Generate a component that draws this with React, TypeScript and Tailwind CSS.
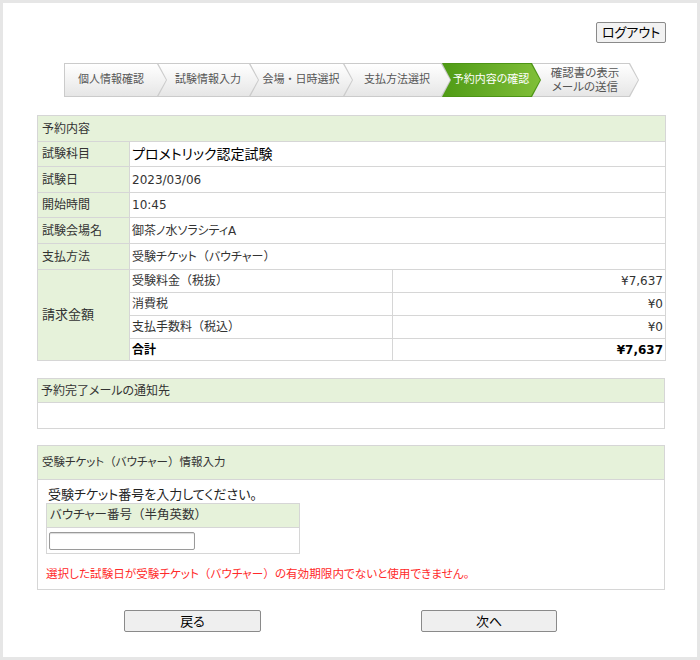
import React from 'react';

interface StepProps {
  label: React.ReactNode;
  className: string;
  active?: boolean;
  first?: boolean;
}

const chevron = '[clip-path:polygon(0_0,calc(100%_-_9px)_0,100%_50%,calc(100%_-_9px)_100%,0_100%)]';

// 括弧と中黒は全角幅のまま（palt を効かせない）
function jp(text: string) {
  return text.split(/([（）・])/).map((part, i) =>
    /^[（）・]$/.test(part) ? (
      <span key={i} className="[font-feature-settings:normal]">
        {part}
      </span>
    ) : (
      part
    )
  );
}

function Step({ label, className, active = false, first = false }: StepProps) {
  return (
    <div className={`relative h-[34px] -mr-[9px] shrink-0 ${className}`}>
      <div className={`absolute inset-0 ${active ? 'bg-[#4c9415]' : 'bg-[#cbcbcb]'} ${chevron}`} />
      <div
        className={`absolute top-px bottom-px right-px ${first ? 'left-px' : 'left-0'} ${
          active
            ? 'bg-gradient-to-r from-[#4f9b14] to-[#80bf38]'
            : 'bg-gradient-to-b from-white to-[#e6e6e6]'
        } ${chevron}`}
      />
      <div
        className={`relative flex h-full items-center justify-center whitespace-nowrap pr-[9px] text-center text-[11px] leading-[14px] ${
          first ? '' : 'pl-[8px]'
        } ${active ? 'text-white' : 'text-[#555]'}`}
      >
        {label}
      </div>
    </div>
  );
}

export default function App() {
  return (
    <div className="h-[660px] w-[700px] border-[3px] border-[#e6e6e6] bg-white font-['DejaVu_Sans','Noto_Sans_CJK_JP',sans-serif] text-[12px] text-[#333] [font-feature-settings:'palt']">
      {/* ログアウト */}
      <div className="flex justify-end pr-[31px] pt-[19px]">
        <button
          type="button"
          className="h-[21px] w-[70px] rounded-[2px] border border-[#8a8a8a] bg-[#f2f2f2] text-[13px] leading-none text-black"
        >
          ログアウト
        </button>
      </div>

      {/* ステップ */}
      <div className="ml-[61px] mt-[20px] flex">
        <Step first label="個人情報確認" className="z-50 w-[103px]" />
        <Step label="試験情報入力" className="z-40 w-[101px]" />
        <Step label={jp('会場・日時選択')} className="z-30 w-[103px]" />
        <Step label="支払方法選択" className="z-20 w-[107px]" />
        <Step active label="予約内容の確認" className="z-10 w-[99px]" />
        <Step
          label={
            <span className="text-[11.5px]">
              確認書の表示
              <br />
              メールの送信
            </span>
          }
          className="z-0 w-[107px]"
        />
      </div>

      {/* 予約内容 */}
      <table className="ml-[34px] mt-[18px] w-[628px] table-fixed border-collapse">
        <colgroup>
          <col className="w-[92px]" />
          <col className="w-[263px]" />
          <col className="w-[273px]" />
        </colgroup>
        <tbody>
          <tr>
            <td colSpan={3} className="h-[26px] border border-[#d6d6d6] bg-[#e6f2da] pl-[4px]">
              予約内容
            </td>
          </tr>
          <tr>
            <td className="h-[25px] border border-[#d6d6d6] bg-[#e6f2da] pl-[4px]">試験科目</td>
            <td colSpan={2} className="border border-[#d6d6d6] pl-[2px] text-[14px] text-black">
              プロメトリック認定試験
            </td>
          </tr>
          <tr>
            <td className="h-[26px] border border-[#d6d6d6] bg-[#e6f2da] pl-[4px]">試験日</td>
            <td colSpan={2} className="border border-[#d6d6d6] pl-[2px]">2023/03/06</td>
          </tr>
          <tr>
            <td className="h-[25px] border border-[#d6d6d6] bg-[#e6f2da] pl-[4px]">開始時間</td>
            <td colSpan={2} className="border border-[#d6d6d6] pl-[2px]">10:45</td>
          </tr>
          <tr>
            <td className="h-[26px] border border-[#d6d6d6] bg-[#e6f2da] pl-[4px]">試験会場名</td>
            <td colSpan={2} className="border border-[#d6d6d6] pl-[2px]">御茶ノ水ソラシティA</td>
          </tr>
          <tr>
            <td className="h-[26px] border border-[#d6d6d6] bg-[#e6f2da] pl-[4px]">支払方法</td>
            <td colSpan={2} className="border border-[#d6d6d6] pl-[2px]">{jp('受験チケット（バウチャー）')}</td>
          </tr>
          <tr>
            <td rowSpan={4} className="border border-[#d6d6d6] bg-[#e6f2da] pl-[4px] text-[13px]">
              請求金額
            </td>
            <td className="h-[23px] border border-[#d6d6d6] pl-[2px]">{jp('受験料金（税抜）')}</td>
            <td className="border border-[#d6d6d6] pr-[2px] text-right">¥7,637</td>
          </tr>
          <tr>
            <td className="h-[23px] border border-[#d6d6d6] pl-[2px]">消費税</td>
            <td className="border border-[#d6d6d6] pr-[2px] text-right">¥0</td>
          </tr>
          <tr>
            <td className="h-[23px] border border-[#d6d6d6] pl-[2px]">{jp('支払手数料（税込）')}</td>
            <td className="border border-[#d6d6d6] pr-[2px] text-right">¥0</td>
          </tr>
          <tr>
            <td className="h-[22px] border border-[#d6d6d6] pl-[2px] font-bold text-black">合計</td>
            <td className="border border-[#d6d6d6] pr-[2px] text-right font-bold text-black">¥7,637</td>
          </tr>
        </tbody>
      </table>

      {/* 予約完了メールの通知先 */}
      <div className="ml-[34px] mt-[17px] w-[628px] border border-[#d6d6d6]">
        <div className="flex h-[24px] items-center border-b border-[#d6d6d6] bg-[#e6f2da] pl-[3px]">
          予約完了メールの通知先
        </div>
        <div className="h-[25px]" />
      </div>

      {/* 受験チケット情報入力 */}
      <div className="ml-[34px] mt-[16px] w-[628px] border border-[#d6d6d6] pb-[7px]">
        <div className="flex h-[34px] items-center border-b border-[#d6d6d6] bg-[#e6f2da] pl-[4px] text-[11.5px]">
          {jp('受験チケット（バウチャー）情報入力')}
        </div>
        <div className="pl-[8px] pt-[7px]">
          <p className="pl-[2px] text-[13px] leading-[16px] text-[#222]">受験チケット番号を入力してください。</p>
          <div className="w-[254px] border border-[#d6d6d6]">
            <div className="flex h-[24px] items-center border-b border-[#d6d6d6] bg-[#e6f2da] pl-[3px] text-[12.5px]">
              {jp('バウチャー番号（半角英数）')}
            </div>
            <div className="h-[25px] pl-[2px] pt-[4px]">
              <input
                type="text"
                className="h-[18px] w-[146px] rounded-[2px] border border-[#9a9a9a] bg-white shadow-[inset_0_1px_1px_rgba(0,0,0,0.15)]"
              />
            </div>
          </div>
          <p className="mt-[12px] text-[11.6px] leading-[16px] text-[#ff2a2a]">
            {jp('選択した試験日が受験チケット（バウチャー）の有効期限内でないと使用できません。')}
          </p>
        </div>
      </div>

      {/* ボタン */}
      <div className="ml-[121px] mt-[20px] flex gap-[160px]">
        <button
          type="button"
          className="h-[22px] w-[137px] rounded-[2px] border border-[#8a8a8a] bg-[#efefef] text-[13px] leading-none text-black"
        >
          戻る
        </button>
        <button
          type="button"
          className="h-[22px] w-[136px] rounded-[2px] border border-[#8a8a8a] bg-[#efefef] text-[13px] leading-none text-black"
        >
          次へ
        </button>
      </div>
    </div>
  );
}
